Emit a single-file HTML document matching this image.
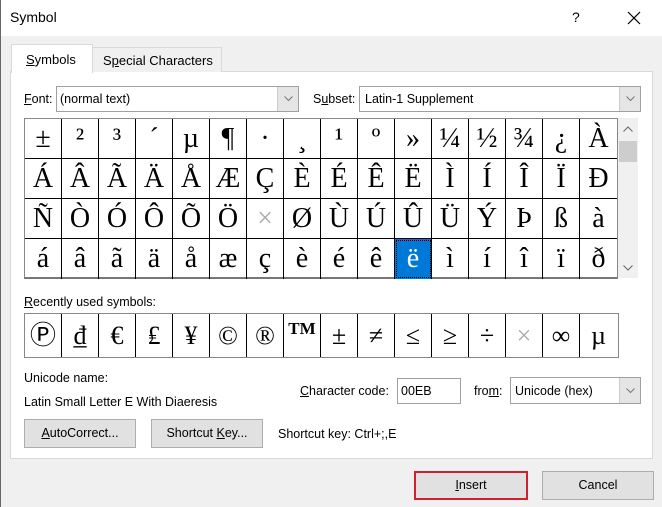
<!DOCTYPE html>
<html><head><meta charset="utf-8"><style>
*{box-sizing:border-box;margin:0;padding:0}
body{width:662px;height:507px;background:#f0f0f0;font-family:"Liberation Sans",sans-serif;font-size:12px;color:#000;position:relative;overflow:hidden}
.a{position:absolute}
.t{position:absolute;white-space:nowrap}
u{text-decoration:underline}
.grid{position:absolute;left:24px;top:118px;width:594px;height:161px;border:1px solid #888;background:#fff;border-bottom:2px solid #777}
.cell{position:absolute;width:37px;height:40px;border-right:1px solid #000;border-bottom:1px solid #000;font-family:"Liberation Serif",serif;font-size:28px;text-align:center;line-height:40px}
.rec{position:absolute;left:24px;top:313px;width:595px;height:45px;border:1px solid #888;background:#fff}
.rc{position:absolute;top:0;width:37px;height:43px;border-right:1px solid #000;font-family:"Liberation Serif",serif;font-size:26px;text-align:center;line-height:43px}
.btn{position:absolute;background:#e1e1e1;border:1px solid #adadad;text-align:center;font-size:12.5px}
.combo{position:absolute;background:#fff;border:1px solid #a0a0a0;font-size:12.5px}
.dd{position:absolute;right:0;top:0;bottom:0;width:21px;background:#e5e5e5;border-left:1px solid #ccc}
.dd svg{position:absolute;left:6px;top:50%;margin-top:-3px}
</style></head><body>
<div class="a" style="left:0;top:0;width:662px;height:36px;background:#fff"></div>
<div class="a" style="left:0;top:0;width:1px;height:507px;background:#666"></div>
<div class="t" style="left:10px;top:9px;font-size:14px">Symbol</div>
<div class="t" style="left:572px;top:9px;font-size:14px">?</div>
<svg class="a" style="left:627px;top:11px" width="14" height="14"><path d="M1 1L13 13M13 1L1 13" stroke="#000" stroke-width="1.2"/></svg>

<div class="a" style="left:10px;top:71px;width:643px;height:388px;background:#fff;border:1px solid #d9d9d9"></div>
<div class="a" style="left:92px;top:47px;width:130px;height:25px;background:#f0f0f0;border:1px solid #d9d9d9;border-bottom:none"></div>
<div class="t" style="left:103px;top:53px;font-size:13px">S<u>p</u>ecial Characters</div>
<div class="a" style="left:11px;top:44px;width:82px;height:29px;background:#fff;border:1px solid #d9d9d9;border-bottom:none"></div>
<div class="t" style="left:26px;top:52px;font-size:13px"><u>S</u>ymbols</div>

<div class="t" style="left:24px;top:92px;font-size:12.5px"><u>F</u>ont:</div>
<div class="combo" style="left:56px;top:86px;width:243px;height:26px"><span class="t" style="left:3px;top:5px">(normal text)</span><div class="dd"><svg width="9" height="6"><path d="M0.5 0.5L4.5 4.5L8.5 0.5" fill="none" stroke="#777"/></svg></div></div>
<div class="t" style="left:313px;top:92px;font-size:12.5px">S<u>u</u>bset:</div>
<div class="combo" style="left:359px;top:86px;width:282px;height:26px"><span class="t" style="left:5px;top:5px">Latin-1 Supplement</span><div class="dd"><svg width="9" height="6"><path d="M0.5 0.5L4.5 4.5L8.5 0.5" fill="none" stroke="#777"/></svg></div></div>

<div class="grid" id="g"></div>
<div class="a" style="left:618px;top:118px;width:20px;height:160px;background:#f0f0f0"></div>
<div class="a" style="left:619px;top:141px;width:18px;height:21px;background:#cdcdcd"></div>
<svg class="a" style="left:623px;top:126px" width="10" height="6"><path d="M0.5 5.5L5 1L9.5 5.5" fill="none" stroke="#666"/></svg>
<svg class="a" style="left:623px;top:265px" width="10" height="6"><path d="M0.5 0.5L5 5L9.5 0.5" fill="none" stroke="#666"/></svg>

<div class="t" style="left:24px;top:295px;font-size:12.5px"><u>R</u>ecently used symbols:</div>
<div class="rec" id="r"></div>

<div class="t" style="left:24px;top:371px;font-size:12.5px">Unicode name:</div>
<div class="t" style="left:24px;top:395px;font-size:12.5px">Latin Small Letter E With Diaeresis</div>
<div class="t" style="left:300px;top:384px;font-size:12.5px"><u>C</u>haracter code:</div>
<div class="combo" style="left:397px;top:378px;width:64px;height:26px"><span class="t" style="left:3px;top:5px">00EB</span></div>
<div class="t" style="left:474px;top:384px;font-size:12.5px">fro<u>m</u>:</div>
<div class="combo" style="left:510px;top:377px;width:131px;height:27px"><span class="t" style="left:4px;top:6px">Unicode (hex)</span><div class="dd"><svg width="9" height="6"><path d="M0.5 0.5L4.5 4.5L8.5 0.5" fill="none" stroke="#777"/></svg></div></div>

<div class="btn" style="left:24px;top:419px;width:112px;height:29px;line-height:27px"><u>A</u>utoCorrect...</div>
<div class="btn" style="left:151px;top:419px;width:112px;height:29px;line-height:27px">Shortcut <u>K</u>ey...</div>
<div class="t" style="left:278px;top:427px;font-size:12.5px">Shortcut key: Ctrl+;,E</div>

<div class="btn" style="left:414px;top:471px;width:114px;height:29px;line-height:25px;border:2px solid #d0202e"><u>I</u>nsert</div>
<div class="btn" style="left:542px;top:471px;width:112px;height:29px;line-height:27px">Cancel</div>

<script>
var rows=[["±","²","³","´","µ","¶","·","¸","¹","º","»","¼","½","¾","¿","À"],
["Á","Â","Ã","Ä","Å","Æ","Ç","È","É","Ê","Ë","Ì","Í","Î","Ï","Ð"],
["Ñ","Ò","Ó","Ô","Õ","Ö","×","Ø","Ù","Ú","Û","Ü","Ý","Þ","ß","à"],
["á","â","ã","ä","å","æ","ç","è","é","ê","ë","ì","í","î","ï","ð"]];
var g=document.getElementById('g'),h='';
rows.forEach(function(r,i){r.forEach(function(c,j){
var st='left:'+(j*37)+'px;top:'+(i*40)+'px;';
if(i==3&&j==10)st+='background:#0078d7;color:#fff;outline:1px dotted #000;outline-offset:-2px;';
if(c=='×')st+='color:#aaa;';
if(j==15)st+='border-right:none;';
if(i==3)st+='border-bottom:none;';
h+='<div class="cell" style="'+st+'">'+c+'</div>';});});
g.innerHTML=h;
var rc=["Ⓟ","₫","€","₤","¥","©","®","TM","±","≠","≤","≥","÷","×","∞","µ"];h='';
rc.forEach(function(c,j){var st='left:'+(j*37)+'px;';if(c=='×')st+='color:#aaa;';if(j==15)st+='border-right:none;';
if(c=='TM')st+='font-weight:bold;font-size:17px;line-height:30px;';
h+='<div class="rc" style="'+st+'">'+c+'</div>';});
document.getElementById('r').innerHTML=h;
</script>
</body></html>
